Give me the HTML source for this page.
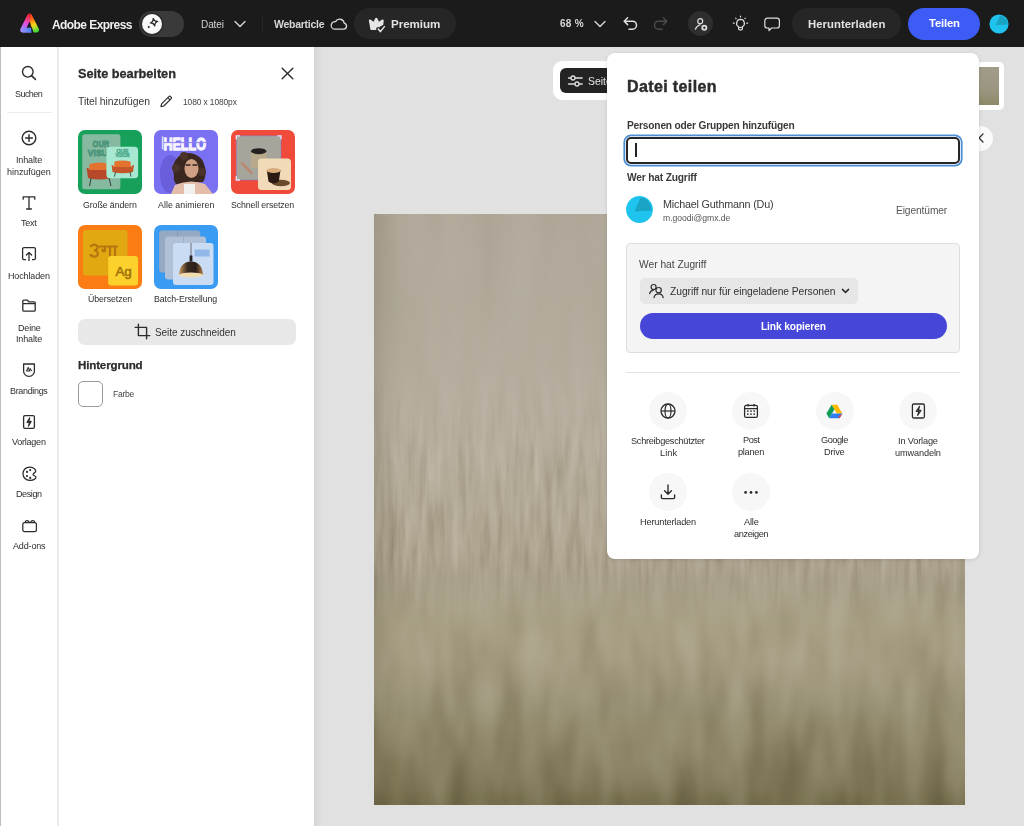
<!DOCTYPE html>
<html><head><meta charset="utf-8"><style>
html,body{margin:0;padding:0;width:1024px;height:826px;overflow:hidden;background:#e1e1e1;font-family:"Liberation Sans", sans-serif}
#root{position:absolute;left:0;top:0;width:1024px;height:826px;filter:blur(0.35px)}
div{box-sizing:border-box}
#root>div{will-change:transform}
</style></head><body><div id="root">
<div style="position:absolute;left:0;top:0;width:1024px;height:47px;background:#1b1b1b"></div>
<svg style="position:absolute;left:18px;top:11px" width="24" height="24" viewBox="0 0 24 24">
<defs>
<linearGradient id="lgR" gradientUnits="userSpaceOnUse" x1="11" y1="3" x2="19" y2="21"><stop offset="0" stop-color="#f5202a"/><stop offset="0.3" stop-color="#ff6a14"/><stop offset="0.58" stop-color="#ffd21a"/><stop offset="0.8" stop-color="#9ade2a"/><stop offset="1" stop-color="#34d43a"/></linearGradient>
<linearGradient id="lgL" gradientUnits="userSpaceOnUse" x1="11" y1="3" x2="5" y2="19"><stop offset="0" stop-color="#f5202a"/><stop offset="0.3" stop-color="#f23a7a"/><stop offset="0.6" stop-color="#e050e0"/><stop offset="1" stop-color="#a484ff"/></linearGradient>
<linearGradient id="lgB" gradientUnits="userSpaceOnUse" x1="2" y1="0" x2="14" y2="0"><stop offset="0" stop-color="#a890ff"/><stop offset="1" stop-color="#4080f2"/></linearGradient>
<clipPath id="cR"><path d="M11.6 0 H24 V24 H15 L11.6 10.4 Z"/></clipPath>
<clipPath id="cL"><path d="M11.6 0 H0 V24 H15 L11.6 10.4 Z"/></clipPath>
</defs>
<path clip-path="url(#cR)" d="M11.6 5 L18.5 18.9 L4.7 18.9 Z" fill="url(#lgR)" stroke="url(#lgR)" stroke-width="5" stroke-linejoin="round"/>
<path clip-path="url(#cL)" d="M11.6 5 L18.5 18.9 L4.7 18.9 Z" fill="url(#lgL)" stroke="url(#lgL)" stroke-width="5" stroke-linejoin="round"/>
<path d="M4.8 19.4 L5.8 18.4 L12.6 18.4 L12.8 19.4 Z" fill="url(#lgB)" stroke="url(#lgB)" stroke-width="4" stroke-linejoin="round"/>
<path d="M11.6 11 L8.9 16.4 L13.3 16.4 Z" fill="#1b1b1b" stroke="#1b1b1b" stroke-width="0.5" stroke-linejoin="round"/>
<path d="M13 16.2 L13.7 16.2 L16 22.6 L13.6 22.6 Z" fill="#1b1b1b"/>
</svg>
<div style="position:absolute;left:52.00px;top:18.74px;font-size:12px;line-height:12px;font-weight:700;color:#efefef;letter-spacing:-0.572px;white-space:pre">Adobe Express</div>
<div style="position:absolute;left:139px;top:11px;width:45px;height:26px;border-radius:13px;background:#3a3a3a"></div>
<div style="position:absolute;left:142px;top:14px;width:20px;height:20px;border-radius:10px;background:#fafafa;box-shadow:0 0 0 1.5px #2e2e2e"></div>
<svg style="position:absolute;left:142px;top:14px" width="20" height="20" viewBox="0 0 20 20">
<g transform="rotate(-12 12 8.2)"><path d="M12 4.4 Q12.5 7.7 15.8 8.2 Q12.5 8.7 12 12 Q11.5 8.7 8.2 8.2 Q11.5 7.7 12 4.4Z" fill="none" stroke="#2a2a2a" stroke-width="1.25" stroke-linejoin="round"/></g>
<circle cx="6.8" cy="13" r="1.05" fill="#2a2a2a"/>
</svg>
<div style="position:absolute;left:200.50px;top:19.63px;font-size:10px;line-height:10px;font-weight:400;color:#d4d4d4;letter-spacing:-0.086px;white-space:pre">Datei</div>
<svg style="position:absolute;left:233px;top:19px" width="14" height="10" viewBox="0 0 14 10"><path d="M2 2.5 L7 7.5 L12 2.5" fill="none" stroke="#d4d4d4" stroke-width="1.4" stroke-linecap="round" stroke-linejoin="round"/></svg>
<div style="position:absolute;left:262px;top:17px;width:1px;height:14px;background:#262626"></div>
<div style="position:absolute;left:273.50px;top:19.31px;font-size:10.5px;line-height:10.5px;font-weight:700;color:#d8d8d8;letter-spacing:-0.268px;white-space:pre">Webarticle</div>
<svg style="position:absolute;left:330px;top:16px" width="18" height="15" viewBox="0 0 18 15"><path d="M4.5 13.2 H13.6 A3.1 3.1 0 0 0 14.2 7.1 A4.6 4.6 0 0 0 5.6 5.6 A3.8 3.8 0 0 0 4.5 13.2Z" fill="none" stroke="#d8d8d8" stroke-width="1.3" stroke-linejoin="round"/></svg>
<div style="position:absolute;left:354px;top:8px;width:102px;height:31px;border-radius:15.5px;background:#262626"></div>
<svg style="position:absolute;left:367px;top:15.6px" width="20" height="18" viewBox="0 0 20 18">
<path transform="translate(0 0.6) scale(1.13 0.86)" d="M1.6 4.6 Q1.8 2.6 3.4 3.6 L5.8 6 L7.2 2.2 Q8.2 0.4 9.2 2.2 L10.6 6 L13 3.6 Q14.6 2.6 14.8 4.6 L14.4 10.2 Q11.8 10.6 10.6 13.4 L10.2 15.6 H4.2 Q3.2 15.6 3 14.6 Z" fill="#e6e6e6"/>
<path d="M11.2 13 L13.4 15.6 L17.4 10.6" fill="none" stroke="#262626" stroke-width="4" stroke-linecap="round" stroke-linejoin="round"/><path d="M11.2 13 L13.4 15.6 L17.4 10.6" fill="none" stroke="#e6e6e6" stroke-width="1.5" stroke-linecap="round" stroke-linejoin="round"/>
</svg>
<div style="position:absolute;left:390.70px;top:18.18px;font-size:11.6px;line-height:11.6px;font-weight:700;color:#e2e2e2;letter-spacing:-0.057px;white-space:pre">Premium</div>
<div style="position:absolute;left:559.70px;top:19.43px;font-size:10px;line-height:10px;font-weight:700;color:#d8d8d8;letter-spacing:0.302px;white-space:pre">68 %</div>
<svg style="position:absolute;left:593px;top:19px" width="14" height="10" viewBox="0 0 14 10"><path d="M2 2.5 L7 7.5 L12 2.5" fill="none" stroke="#d4d4d4" stroke-width="1.4" stroke-linecap="round" stroke-linejoin="round"/></svg>
<svg style="position:absolute;left:622px;top:15px" width="18" height="16" viewBox="0 0 18 16"><path d="M2.5 6.2 H10.5 A4 4 0 0 1 10.5 14.2 H7" fill="none" stroke="#e0e0e0" stroke-width="1.5" stroke-linecap="round"/><path d="M5.6 2.8 L2.2 6.2 L5.6 9.6" fill="none" stroke="#e0e0e0" stroke-width="1.5" stroke-linecap="round" stroke-linejoin="round"/></svg>
<svg style="position:absolute;left:651px;top:15px" width="18" height="16" viewBox="0 0 18 16"><path d="M15.5 6.2 H7.5 A4 4 0 0 0 7.5 14.2 H11" fill="none" stroke="#4a4a4a" stroke-width="1.5" stroke-linecap="round"/><path d="M12.4 2.8 L15.8 6.2 L12.4 9.6" fill="none" stroke="#4a4a4a" stroke-width="1.5" stroke-linecap="round" stroke-linejoin="round"/></svg>
<div style="position:absolute;left:688px;top:11px;width:25px;height:25px;border-radius:12.5px;background:#2e2e2e"></div>
<svg style="position:absolute;left:688px;top:11px" width="25" height="25" viewBox="0 0 25 25">
<circle cx="12.2" cy="10.2" r="2.5" fill="none" stroke="#dedede" stroke-width="1.2"/>
<path d="M7.4 18.2 Q8.8 14.6 12 13.8" fill="none" stroke="#dedede" stroke-width="1.2" stroke-linecap="round"/>
<circle cx="16.3" cy="16.8" r="3" fill="#dedede"/>
<path d="M16.3 15.4 V18.2 M14.9 16.8 H17.7" stroke="#2e2e2e" stroke-width="1"/>
</svg>
<svg style="position:absolute;left:731px;top:14px" width="19" height="19" viewBox="0 0 19 19">
<path d="M9.5 5.4 A3.9 3.9 0 0 0 7.6 12.7 V14.8 Q7.6 15.9 8.7 15.9 H10.3 Q11.4 15.9 11.4 14.8 V12.7 A3.9 3.9 0 0 0 9.5 5.4Z" fill="none" stroke="#dedede" stroke-width="1.2" stroke-linejoin="round"/>
<path d="M7.8 13.4 H11.2" stroke="#dedede" stroke-width="1.1"/>
<path d="M9.5 2.2 V2.9 M4.7 4.2 L5.1 4.6 M14.3 4.2 L13.9 4.6 M2.4 9.2 H3.2 M15.8 9.2 H16.6" stroke="#dedede" stroke-width="1.2" stroke-linecap="round"/>
</svg>
<svg style="position:absolute;left:763px;top:16px" width="18" height="17" viewBox="0 0 18 17"><path d="M4.4 2.2 H13.8 A2.6 2.6 0 0 1 16.4 4.8 V9.4 A2.6 2.6 0 0 1 13.8 12 H8.6 L6 14.6 V12 H4.4 A2.6 2.6 0 0 1 1.8 9.4 V4.8 A2.6 2.6 0 0 1 4.4 2.2Z" fill="none" stroke="#dedede" stroke-width="1.2" stroke-linejoin="round"/></svg>
<div style="position:absolute;left:792px;top:8px;width:109px;height:31px;border-radius:15.5px;background:#262626"></div>
<div style="position:absolute;left:808.00px;top:18.63px;font-size:11.3px;line-height:11.3px;font-weight:700;color:#e2e2e2;letter-spacing:0.058px;white-space:pre">Herunterladen</div>
<div style="position:absolute;left:908px;top:8px;width:72px;height:32px;border-radius:16px;background:#3d5cf5"></div>
<div style="position:absolute;left:928.50px;top:18.43px;font-size:11.3px;line-height:11.3px;font-weight:700;color:#ffffff;letter-spacing:-0.163px;white-space:pre">Teilen</div>
<svg style="position:absolute;left:989px;top:14px" width="20" height="20" viewBox="0 0 20 20">
<circle cx="10" cy="10" r="9.6" fill="#1ec4ee"/>
<path d="M11 1.5 A8.6 8.6 0 0 1 18.8 10.5 L6.5 11.2 Z" fill="#19a3c4"/>
</svg>
<div style="position:absolute;left:0;top:47px;width:59px;height:779px;background:#ffffff;border-right:2px solid #ebebeb;box-sizing:border-box"></div>
<div style="position:absolute;left:0;top:47px;width:1px;height:779px;background:#bdbdbd"></div>
<div style="position:absolute;left:7px;top:112px;width:45px;height:1px;background:#ececec"></div>
<svg style="position:absolute;left:20px;top:64px" width="18" height="18" viewBox="0 0 18 18"><circle cx="7.8" cy="7.8" r="5.3" fill="none" stroke="#2c2c2c" stroke-width="1.4"/><path d="M11.6 11.6 L15.4 15.4" stroke="#2c2c2c" stroke-width="1.5" stroke-linecap="round"/></svg>
<div style="position:absolute;left:15.15px;top:90.08px;font-size:9px;line-height:9px;font-weight:400;color:#2e2e2e;letter-spacing:-0.565px;white-space:pre">Suchen</div>
<svg style="position:absolute;left:20px;top:129px" width="18" height="18" viewBox="0 0 18 18"><circle cx="9" cy="9" r="6.8" fill="none" stroke="#2c2c2c" stroke-width="1.4"/><path d="M9 5.6 V12.4 M5.6 9 H12.4" stroke="#2c2c2c" stroke-width="1.4" stroke-linecap="round"/></svg>
<div style="position:absolute;left:15.90px;top:156.08px;font-size:9px;line-height:9px;font-weight:400;color:#2e2e2e;letter-spacing:-0.137px;white-space:pre">Inhalte</div>
<div style="position:absolute;left:7.15px;top:167.68px;font-size:9px;line-height:9px;font-weight:400;color:#2e2e2e;letter-spacing:-0.038px;white-space:pre">hinzufügen</div>
<svg style="position:absolute;left:21px;top:195px" width="16" height="16" viewBox="0 0 16 16"><path d="M2.2 4.2 V1.8 H13.8 V4.2 M8 1.8 V14 M5.6 14 H10.4" fill="none" stroke="#2c2c2c" stroke-width="1.3" stroke-linecap="round" stroke-linejoin="round"/></svg>
<div style="position:absolute;left:21.15px;top:219.08px;font-size:9px;line-height:9px;font-weight:400;color:#2e2e2e;letter-spacing:-0.269px;white-space:pre">Text</div>
<svg style="position:absolute;left:21px;top:246px" width="16" height="16" viewBox="0 0 16 16"><path d="M5 13.6 H3 A1.4 1.4 0 0 1 1.6 12.2 V3 A1.4 1.4 0 0 1 3 1.6 H13 A1.4 1.4 0 0 1 14.4 3 V12.2 A1.4 1.4 0 0 1 13 13.6 H11" fill="none" stroke="#2c2c2c" stroke-width="1.3"/><path d="M8 14.6 V6.6 M5.4 9 L8 6.4 L10.6 9" fill="none" stroke="#2c2c2c" stroke-width="1.3" stroke-linecap="round" stroke-linejoin="round"/></svg>
<div style="position:absolute;left:8.00px;top:272.08px;font-size:9px;line-height:9px;font-weight:400;color:#2e2e2e;letter-spacing:-0.129px;white-space:pre">Hochladen</div>
<svg style="position:absolute;left:21px;top:298px" width="16" height="15" viewBox="0 0 16 15"><path d="M1.8 3.2 A1 1 0 0 1 2.8 2.2 H6.4 L7.8 3.8 H13.2 A1 1 0 0 1 14.2 4.8 V12.2 A1 1 0 0 1 13.2 13.2 H2.8 A1 1 0 0 1 1.8 12.2 Z M1.8 5.6 H14.2" fill="none" stroke="#2c2c2c" stroke-width="1.3" stroke-linejoin="round"/></svg>
<div style="position:absolute;left:17.60px;top:323.88px;font-size:9px;line-height:9px;font-weight:400;color:#2e2e2e;letter-spacing:-0.179px;white-space:pre">Deine</div>
<div style="position:absolute;left:15.90px;top:335.48px;font-size:9px;line-height:9px;font-weight:400;color:#2e2e2e;letter-spacing:-0.137px;white-space:pre">Inhalte</div>
<svg style="position:absolute;left:21px;top:362px" width="16" height="16" viewBox="0 0 16 16"><path d="M2.6 2 H13.4 V8.6 A5.4 5.4 0 0 1 8 14.4 A5.4 5.4 0 0 1 2.6 8.6 Z" fill="none" stroke="#2c2c2c" stroke-width="1.3" stroke-linejoin="round"/><path d="M5.6 9 L7.2 5.4 L8.8 9 Z M9 6.4 L10.6 9" fill="none" stroke="#2c2c2c" stroke-width="1.1" stroke-linejoin="round"/></svg>
<div style="position:absolute;left:10.10px;top:386.88px;font-size:9px;line-height:9px;font-weight:400;color:#2e2e2e;letter-spacing:-0.341px;white-space:pre">Brandings</div>
<svg style="position:absolute;left:21px;top:414px" width="16" height="16" viewBox="0 0 16 16"><rect x="2.6" y="1.6" width="10.8" height="12.8" rx="1.4" fill="none" stroke="#2c2c2c" stroke-width="1.3"/><path d="M8.8 3.8 L6 8.4 H8.4 L7.4 12.2 L10.2 7.4 H7.8 Z" fill="none" stroke="#2c2c2c" stroke-width="1.1" stroke-linejoin="round"/></svg>
<div style="position:absolute;left:12.05px;top:437.88px;font-size:9px;line-height:9px;font-weight:400;color:#2e2e2e;letter-spacing:-0.233px;white-space:pre">Vorlagen</div>
<svg style="position:absolute;left:21px;top:465px" width="16" height="16" viewBox="0 0 16 16"><path d="M8.6 2.1 C4.6 2.1 2 5 2 8.7 C2 12.6 5 15.4 9 15.4 C12.2 15.4 15 13.8 15 12.2 C15 11 13.6 10.9 12.6 10.3 C11.6 9.7 12.2 8.5 13.3 7.9 C14.5 7.3 14.9 6.3 14.5 5.3 C13.5 3.1 11.2 2.1 8.6 2.1 Z" fill="none" stroke="#2c2c2c" stroke-width="1.25" stroke-linejoin="round"/><circle cx="6" cy="6.9" r="1.1" fill="#2c2c2c"/><circle cx="9.2" cy="5.1" r="1.1" fill="#2c2c2c"/><circle cx="6" cy="11" r="1.1" fill="#2c2c2c"/><circle cx="9.2" cy="12.9" r="1.1" fill="#2c2c2c"/></svg>
<div style="position:absolute;left:16.00px;top:490.08px;font-size:9px;line-height:9px;font-weight:400;color:#2e2e2e;letter-spacing:-0.403px;white-space:pre">Design</div>
<svg style="position:absolute;left:21px;top:517px" width="16" height="16" viewBox="0 0 16 16"><rect x="1.8" y="5.6" width="13.6" height="9" rx="1.6" fill="none" stroke="#2c2c2c" stroke-width="1.25"/><path d="M4.2 5.6 A1.9 1.9 0 0 1 8 5.6 M9.8 5.6 A1.9 1.9 0 0 1 13.6 5.6" fill="none" stroke="#2c2c2c" stroke-width="1.25"/></svg>
<div style="position:absolute;left:12.70px;top:542.08px;font-size:9px;line-height:9px;font-weight:400;color:#2e2e2e;letter-spacing:-0.154px;white-space:pre">Add-ons</div>
<div style="position:absolute;left:59px;top:47px;width:255px;height:779px;background:#ffffff"></div>
<div style="position:absolute;left:78.00px;top:68.15px;font-size:12.7px;line-height:12.7px;font-weight:700;color:#2c2c2c;letter-spacing:-0.007px;white-space:pre;-webkit-text-stroke:0.3px #2c2c2c">Seite bearbeiten</div>
<svg style="position:absolute;left:280px;top:66px" width="15" height="15" viewBox="0 0 15 15"><path d="M2.2 2.2 L12.8 12.8 M12.8 2.2 L2.2 12.8" stroke="#2c2c2c" stroke-width="1.4" stroke-linecap="round"/></svg>
<div style="position:absolute;left:78.40px;top:97.29px;font-size:10.4px;line-height:10.4px;font-weight:400;color:#3a3a3a;letter-spacing:-0.069px;white-space:pre">Titel hinzufügen</div>
<svg style="position:absolute;left:159px;top:95px" width="14" height="13" viewBox="0 0 14 13"><path d="M2 11.6 L2.6 8.8 L9.8 1.6 A1.2 1.2 0 0 1 11.6 1.6 L12 2 A1.2 1.2 0 0 1 12 3.8 L4.8 11 Z M8.8 2.6 L11 4.8" fill="none" stroke="#2c2c2c" stroke-width="1.2" stroke-linejoin="round"/></svg>
<div style="position:absolute;left:182.50px;top:98.29px;font-size:8.4px;line-height:8.4px;font-weight:400;color:#444444;letter-spacing:-0.093px;white-space:pre">1080 x 1080px</div>
<svg style="position:absolute;left:78px;top:130px" width="64" height="64" viewBox="0 0 64 64"><defs><clipPath id="cc78130"><rect width="64" height="64" rx="7"/></clipPath></defs><g clip-path="url(#cc78130)"><rect width="64" height="64" fill="#17a05a"/>
<rect x="4.2" y="4.2" width="38.2" height="55" rx="2.5" fill="#86baa0"/>
<text x="14.6" y="17.2" font-family="Liberation Sans" font-weight="700" font-size="9.6" fill="#4c977c" stroke="#4c977c" stroke-width="0.9" textLength="16.6" lengthAdjust="spacingAndGlyphs">OUR</text>
<text x="9.8" y="25.8" font-family="Liberation Sans" font-weight="700" font-size="9.6" fill="#4c977c" stroke="#4c977c" stroke-width="0.9" textLength="20" lengthAdjust="spacingAndGlyphs">VISU</text>
<path d="M11.5 34 Q21 31 31 34 L31.5 42 L11 42 Z" fill="#e3732f"/>
<path d="M8.6 38 Q10 37 11.5 40 L31 40 Q33 37 34 38 L33 48 Q22 51 10 48 Z" fill="#b8482a"/>
<path d="M13 48 L11.6 56 M31 48 L33 56" stroke="#2a2a2a" stroke-width="0.9"/>
<rect x="28.4" y="16.8" width="31.7" height="31.4" rx="3.5" fill="#a7e8d0"/>
<text x="38.5" y="22.6" font-family="Liberation Sans" font-weight="700" font-size="5" fill="#4ca88c" stroke="#4ca88c" stroke-width="0.4" textLength="12" lengthAdjust="spacingAndGlyphs">OUR</text>
<text x="37.6" y="27.4" font-family="Liberation Sans" font-weight="700" font-size="5" fill="#4ca88c" stroke="#4ca88c" stroke-width="0.4" textLength="14" lengthAdjust="spacingAndGlyphs">VISION</text>
<path d="M36.5 31.5 Q44.5 29.5 52.5 31.5 L53 38 L36 38 Z" fill="#e3732f"/>
<path d="M33.6 35 Q35 34.5 36 37 L53 37 Q54.5 34.5 56 35 L55 42 Q45 44.5 34.5 42 Z" fill="#c4562a"/>
<path d="M37.5 42 L36.4 46.6 M52 42 L53 46.6" stroke="#2a2a2a" stroke-width="0.8"/></g></svg>
<svg style="position:absolute;left:154px;top:130px" width="64" height="64" viewBox="0 0 64 64"><defs><clipPath id="cc154130"><rect width="64" height="64" rx="7"/></clipPath></defs><g clip-path="url(#cc154130)"><rect width="64" height="64" fill="#7a70f2"/>
<ellipse cx="16" cy="44" rx="10" ry="19" fill="#6a5edb"/>
<text x="9.4" y="19.6" font-family="Liberation Sans" font-weight="700" font-size="16.5" fill="#f6f4ff" stroke="#f6f4ff" stroke-width="1.3" stroke-linejoin="round" textLength="42.6" lengthAdjust="spacingAndGlyphs">HELLO</text>
<path d="M8 12.6 H53" stroke="#8a80f0" stroke-width="1"/><rect x="7.8" y="6.4" width="1.6" height="13" fill="#d8d4fb"/>
<path d="M20 46 Q17 34 24 27 Q31 21 40 24 Q49 27 51 37 Q53 46 49 52 L22 54 Q19 50 20 46Z" fill="#3a2820"/>
<circle cx="22" cy="38" r="4" fill="#4a3328"/><circle cx="48" cy="42" r="4" fill="#4a3328"/><circle cx="30" cy="26" r="4" fill="#4a3328"/>
<ellipse cx="37.5" cy="38.5" rx="7" ry="9.6" fill="#d0a084"/>
<path d="M31.5 35 H36.5 M38.5 35 H43.5" stroke="#2a2020" stroke-width="1.6"/>
<path d="M17 64 L21 55 Q36 48.5 51 54 L59 64 Z" fill="#e3bda9"/>
<rect x="30" y="54" width="11" height="10" fill="#f3efec"/></g></svg>
<svg style="position:absolute;left:231px;top:130px" width="64" height="64" viewBox="0 0 64 64"><defs><clipPath id="cc231130"><rect width="64" height="64" rx="7"/></clipPath></defs><g clip-path="url(#cc231130)"><rect width="64" height="64" fill="#f04b3a"/>
<rect x="5.3" y="5.8" width="44.7" height="44.2" fill="#a5a59c" stroke="#7a6fe6" stroke-width="0.7" stroke-dasharray="2 1.4"/>
<path d="M5.3 9.5 V5.8 H9 M46.3 5.8 H50 V9.5 M5.3 46.3 V50 H9" fill="none" stroke="#e8e4ff" stroke-width="1.3"/>
<rect x="20" y="21" width="15.5" height="17" rx="1.5" fill="#b9aa8e"/>
<ellipse cx="27.7" cy="21.2" rx="7.6" ry="3" fill="#262020"/>
<path d="M10.8 33 L20.5 43" stroke="#b98a72" stroke-width="2.6" stroke-linecap="round"/>
<rect x="27" y="28.6" width="33" height="31.4" rx="3.5" fill="#f1dab8"/>
<ellipse cx="50" cy="53" rx="9" ry="3.2" fill="#6a4b2c"/>
<path d="M35.8 40 L37.5 51.5 Q42.5 55.5 47.8 51.5 L49.5 40 Z" fill="#2a1a12"/>
<ellipse cx="42.6" cy="40.5" rx="6.9" ry="2.6" fill="#d9ad7c"/></g></svg>
<svg style="position:absolute;left:78px;top:225px" width="64" height="64" viewBox="0 0 64 64"><defs><clipPath id="cc78225"><rect width="64" height="64" rx="7"/></clipPath></defs><g clip-path="url(#cc78225)"><rect width="64" height="64" fill="#fb7c12"/>
<rect x="5" y="5" width="44.5" height="45.5" rx="3" fill="#e2a812"/>
<path d="M13 21 Q17 18 19.5 21.5 Q20 25 16 25.5 Q21 26 19.5 30.5 Q16.5 33 12.5 30 M21.5 21.5 H39 M27 21.5 V26 Q24 27 24.5 24.5 M32 21.5 V32 M37 21.5 V32" fill="none" stroke="#b9740f" stroke-width="2.2" stroke-linecap="round"/>
<rect x="30.2" y="31" width="29.8" height="29.4" rx="3" fill="#fdd12b"/>
<text x="37.4" y="51.2" font-family="Liberation Sans" font-weight="400" font-size="13.5" fill="#9c6e0c" stroke="#9c6e0c" stroke-width="0.5" textLength="16.4" lengthAdjust="spacingAndGlyphs">Ag</text></g></svg>
<svg style="position:absolute;left:154px;top:225px" width="64" height="64" viewBox="0 0 64 64"><defs><clipPath id="cc154225"><rect width="64" height="64" rx="7"/></clipPath></defs><g clip-path="url(#cc154225)"><rect width="64" height="64" fill="#3a9bf2"/>
<rect x="5.2" y="5.5" width="41" height="42" rx="3" fill="#96a9c2"/>
<path d="M23.5 5.5 V47.5" stroke="#7f94b0" stroke-width="0.8"/>
<rect x="11" y="11.6" width="41" height="43" rx="3" fill="#afc0d7"/>
<path d="M29.5 11.6 V54.6" stroke="#98abc6" stroke-width="0.8"/>
<rect x="19" y="18" width="40.5" height="42" rx="3" fill="#cadcf4"/>
<rect x="40.6" y="24.5" width="15" height="7" fill="#92b8e8"/>
<path d="M37 18 V32" stroke="#2a2a2a" stroke-width="0.6"/>
<rect x="35.6" y="30.5" width="2.8" height="6" fill="#222"/>
<defs><linearGradient id="lampg" x1="0" y1="0" x2="1" y2="0"><stop offset="0" stop-color="#c89a60"/><stop offset="0.35" stop-color="#3a2a22"/><stop offset="0.7" stop-color="#2a1e18"/><stop offset="1" stop-color="#b08050"/></linearGradient></defs><path d="M25 50 Q25.5 37 37 36.4 Q48.5 37 49 50 Z" fill="url(#lampg)"/>
<ellipse cx="37" cy="50" rx="12" ry="2.6" fill="#f0dcae"/></g></svg>
<div style="position:absolute;left:83.10px;top:200.65px;font-size:8.8px;line-height:8.8px;font-weight:400;color:#2e2e2e;letter-spacing:-0.090px;white-space:pre">Große ändern</div>
<div style="position:absolute;left:157.85px;top:200.65px;font-size:8.8px;line-height:8.8px;font-weight:400;color:#2e2e2e;letter-spacing:0.041px;white-space:pre">Alle animieren</div>
<div style="position:absolute;left:231.40px;top:200.65px;font-size:8.8px;line-height:8.8px;font-weight:400;color:#2e2e2e;letter-spacing:-0.124px;white-space:pre">Schnell ersetzen</div>
<div style="position:absolute;left:87.90px;top:294.65px;font-size:8.8px;line-height:8.8px;font-weight:400;color:#2e2e2e;letter-spacing:-0.089px;white-space:pre">Übersetzen</div>
<div style="position:absolute;left:154.40px;top:294.65px;font-size:8.8px;line-height:8.8px;font-weight:400;color:#2e2e2e;letter-spacing:-0.091px;white-space:pre">Batch-Erstellung</div>
<div style="position:absolute;left:77.5px;top:319px;width:217.5px;height:25.5px;border-radius:7px;background:#e8e8e8"></div>
<svg style="position:absolute;left:134px;top:323px" width="17" height="17" viewBox="0 0 17 17"><path d="M4.4 1.2 V12.6 H15.8 M1.2 4.4 H12.6 V15.8" fill="none" stroke="#2c2c2c" stroke-width="1.4" stroke-linecap="round" stroke-linejoin="round"/></svg>
<div style="position:absolute;left:155.20px;top:327.83px;font-size:10px;line-height:10px;font-weight:400;color:#333333;letter-spacing:-0.058px;white-space:pre">Seite zuschneiden</div>
<div style="position:absolute;left:78.00px;top:359.48px;font-size:11.6px;line-height:11.6px;font-weight:700;color:#2c2c2c;letter-spacing:-0.167px;white-space:pre;-webkit-text-stroke:0.25px #2c2c2c">Hintergrund</div>
<div style="position:absolute;left:77.5px;top:381px;width:25px;height:25.5px;border-radius:5px;background:#fff;border:1px solid #9a9a9a;box-sizing:border-box"></div>
<div style="position:absolute;left:112.80px;top:390.42px;font-size:8.6px;line-height:8.6px;font-weight:400;color:#444444;letter-spacing:-0.317px;white-space:pre">Farbe</div>
<div style="position:absolute;left:314px;top:47px;width:710px;height:779px;background:#e1e1e1"></div>
<div style="position:absolute;left:314px;top:47px;width:9px;height:779px;background:linear-gradient(90deg,#d6d6d6,#e1e1e1)"></div>
<div style="position:absolute;left:374px;top:214px;width:591px;height:591px;background:
linear-gradient(180deg,#b1a89a 0.3%,#b2ab9c 14.6%,#b6ae9f 31.5%,#b6ad9d 39.9%,#b2a996 48.4%,#aea48f 56.9%,#a9a08b 61.9%,#a8a085 68.7%,#a59c82 75.5%,#9a9276 82.2%,#8f8767 89.0%,#837b5b 95.8%,#766f4e 99.7%)"></div>
<svg style="position:absolute;left:374px;top:214px;mix-blend-mode:soft-light" width="591" height="591" viewBox="0 0 591 591">
<defs>
<filter id="nA" x="0" y="0" width="100%" height="100%" color-interpolation-filters="sRGB">
<feTurbulence type="fractalNoise" baseFrequency="0.03 0.004" numOctaves="2" seed="3"/>
<feColorMatrix type="matrix" values="0.45 0 0 0 0.275  0.45 0 0 0 0.275  0.45 0 0 0 0.275  0 0 0 0 1"/>
</filter>
<filter id="nB" x="0" y="0" width="100%" height="100%" color-interpolation-filters="sRGB">
<feTurbulence type="fractalNoise" baseFrequency="0.14 0.014" numOctaves="3" seed="11"/>
<feColorMatrix type="matrix" values="0.5 0 0 0 0.25  0.5 0 0 0 0.25  0.5 0 0 0 0.25  0 0 0 0 1"/>
</filter>
<filter id="nC" x="0" y="0" width="100%" height="100%" color-interpolation-filters="sRGB">
<feTurbulence type="fractalNoise" baseFrequency="0.04 0.012" numOctaves="2" seed="5"/>
<feColorMatrix type="matrix" values="0.55 0 0 0 0.225  0.55 0 0 0 0.225  0.55 0 0 0 0.225  0 0 0 0 1"/>
</filter>
<linearGradient id="gA" x1="0" y1="0" x2="0" y2="1"><stop offset="0" stop-color="#fff" stop-opacity="0.3"/><stop offset="0.3" stop-color="#fff" stop-opacity="0.35"/><stop offset="0.45" stop-color="#fff" stop-opacity="0"/></linearGradient>
<linearGradient id="gB" x1="0" y1="0" x2="0" y2="1"><stop offset="0.25" stop-color="#fff" stop-opacity="0"/><stop offset="0.42" stop-color="#fff" stop-opacity="0.8"/><stop offset="0.6" stop-color="#fff" stop-opacity="0.9"/><stop offset="0.7" stop-color="#fff" stop-opacity="0"/></linearGradient>
<linearGradient id="gC" x1="0" y1="0" x2="0" y2="1"><stop offset="0.58" stop-color="#fff" stop-opacity="0"/><stop offset="0.72" stop-color="#fff" stop-opacity="0.7"/><stop offset="1" stop-color="#fff" stop-opacity="0.7"/></linearGradient>
<mask id="mA"><rect width="591" height="591" fill="url(#gA)"/></mask>
<mask id="mB"><rect width="591" height="591" fill="url(#gB)"/></mask>
<mask id="mC"><rect width="591" height="591" fill="url(#gC)"/></mask>
</defs>
<rect width="591" height="591" fill="#808080"/>
<rect width="591" height="591" filter="url(#nA)" mask="url(#mA)"/>
<rect width="591" height="591" filter="url(#nB)" mask="url(#mB)"/>
<rect width="591" height="591" filter="url(#nC)" mask="url(#mC)"/>
</svg>
<div style="position:absolute;left:374px;top:214px;width:26px;height:591px;background:linear-gradient(90deg,rgba(70,62,35,0.16),rgba(70,62,35,0))"></div>
<div style="position:absolute;left:553px;top:61px;width:70px;height:39px;border-radius:9px;background:#ffffff"></div>
<div style="position:absolute;left:559.5px;top:68px;width:60px;height:25px;border-radius:6px;background:#232323"></div>
<svg style="position:absolute;left:567px;top:73px" width="17" height="16" viewBox="0 0 17 16"><path d="M1.6 5 H15.2 M1.6 11 H15.2" stroke="#e0e0e0" stroke-width="1.3" stroke-linecap="round"/><circle cx="6" cy="5" r="2" fill="#232323" stroke="#e0e0e0" stroke-width="1.3"/><circle cx="10" cy="11" r="2" fill="#232323" stroke="#e0e0e0" stroke-width="1.3"/></svg>
<div style="position:absolute;left:588.40px;top:76.69px;font-size:10.4px;line-height:10.4px;font-weight:400;color:#e6e6e6;letter-spacing:0.000px;white-space:pre">Seite</div>
<div style="position:absolute;left:958px;top:62px;width:46px;height:48px;border-radius:5px;background:#ffffff"></div>
<div style="position:absolute;left:962px;top:67px;width:37px;height:38px;background:linear-gradient(180deg,#a19c8a,#9c9681 60%,#8d8969)"></div>
<div style="position:absolute;left:967.5px;top:125.5px;width:25px;height:25px;border-radius:12.5px;background:#fafafa"></div>
<svg style="position:absolute;left:976px;top:132px" width="10" height="12" viewBox="0 0 10 12"><path d="M7 2 L3 6 L7 10" fill="none" stroke="#333" stroke-width="1.3" stroke-linecap="round" stroke-linejoin="round"/></svg>
<div style="position:absolute;left:607px;top:53px;width:372px;height:506px;border-radius:8px;background:#ffffff;box-shadow:0 1px 4px rgba(0,0,0,0.12)"></div>
<div style="position:absolute;left:626.50px;top:79.15px;font-size:16px;line-height:16px;font-weight:700;color:#2c2c2c;letter-spacing:0.376px;white-space:pre;-webkit-text-stroke:0.45px #2c2c2c">Datei teilen</div>
<div style="position:absolute;left:626.50px;top:121.06px;font-size:10.2px;line-height:10.2px;font-weight:700;color:#3a3a3a;letter-spacing:-0.193px;white-space:pre">Personen oder Gruppen hinzufügen</div>
<div style="position:absolute;left:626px;top:136.8px;width:334px;height:27.4px;border-radius:5px;background:#fff;border:2px solid #262626;box-shadow:0 0 0 0.8px #ffffff,0 0 0 2.6px #4c8ed6"></div>
<div style="position:absolute;left:634.8px;top:143.2px;width:1.6px;height:14.4px;background:#222"></div>
<div style="position:absolute;left:626.50px;top:173.46px;font-size:10.2px;line-height:10.2px;font-weight:700;color:#3a3a3a;letter-spacing:-0.167px;white-space:pre">Wer hat Zugriff</div>
<svg style="position:absolute;left:626px;top:196px" width="27" height="27" viewBox="0 0 27 27">
<circle cx="13.5" cy="13.5" r="13.4" fill="#1ec4ee"/>
<path d="M14.6 1.6 A12 12 0 0 1 25.4 14.6 L8.6 15.4 Z" fill="#19a3c4"/>
</svg>
<div style="position:absolute;left:663.00px;top:198.56px;font-size:10.8px;line-height:10.8px;font-weight:400;color:#3a3a3a;letter-spacing:-0.202px;white-space:pre">Michael Guthmann (Du)</div>
<div style="position:absolute;left:663.00px;top:213.92px;font-size:8.6px;line-height:8.6px;font-weight:400;color:#555555;letter-spacing:-0.010px;white-space:pre">m.goodi@gmx.de</div>
<div style="position:absolute;left:895.50px;top:205.76px;font-size:10.2px;line-height:10.2px;font-weight:400;color:#555555;letter-spacing:-0.096px;white-space:pre">Eigentümer</div>
<div style="position:absolute;left:626px;top:242.5px;width:333.5px;height:109.5px;border-radius:4px;background:#f4f4f4;border:1px solid #dddddd;box-sizing:border-box"></div>
<div style="position:absolute;left:639.40px;top:260.26px;font-size:10.2px;line-height:10.2px;font-weight:400;color:#444444;letter-spacing:0.023px;white-space:pre">Wer hat Zugriff</div>
<div style="position:absolute;left:640px;top:277.8px;width:218px;height:25.5px;border-radius:5px;background:#e6e6e6"></div>
<svg style="position:absolute;left:648px;top:282px" width="17" height="17" viewBox="0 0 17 17">
<circle cx="5.6" cy="5" r="2.5" fill="none" stroke="#2c2c2c" stroke-width="1.2"/>
<path d="M1.6 11.6 Q2.4 8.6 5.2 8.4" fill="none" stroke="#2c2c2c" stroke-width="1.2" stroke-linecap="round"/>
<circle cx="10.6" cy="8.2" r="2.7" fill="#e6e6e6" stroke="#2c2c2c" stroke-width="1.2"/>
<path d="M6 15.6 Q6.8 11.8 10.6 11.8 Q14.4 11.8 15.2 15.6" fill="none" stroke="#2c2c2c" stroke-width="1.2" stroke-linecap="round"/>
</svg>
<div style="position:absolute;left:669.70px;top:286.58px;font-size:10.3px;line-height:10.3px;font-weight:400;color:#333333;letter-spacing:-0.060px;white-space:pre">Zugriff nur für eingeladene Personen</div>
<svg style="position:absolute;left:840px;top:286px" width="11" height="10" viewBox="0 0 11 10"><path d="M2.4 3.4 L5.5 6.4 L8.6 3.4" fill="none" stroke="#2c2c2c" stroke-width="1.5" stroke-linecap="round" stroke-linejoin="round"/></svg>
<div style="position:absolute;left:639.5px;top:313px;width:307px;height:25.5px;border-radius:13px;background:#4646d9"></div>
<div style="position:absolute;left:760.50px;top:321.76px;font-size:10.2px;line-height:10.2px;font-weight:700;color:#ffffff;letter-spacing:-0.110px;white-space:pre">Link kopieren</div>
<div style="position:absolute;left:626px;top:372px;width:334px;height:1px;background:#e2e2e2"></div>
<div style="position:absolute;left:649px;top:392px;width:38px;height:38px;border-radius:19px;background:#f7f7f7"></div>
<div style="position:absolute;left:732px;top:392px;width:38px;height:38px;border-radius:19px;background:#f7f7f7"></div>
<div style="position:absolute;left:815.5px;top:392px;width:38px;height:38px;border-radius:19px;background:#f7f7f7"></div>
<div style="position:absolute;left:899px;top:392px;width:38px;height:38px;border-radius:19px;background:#f7f7f7"></div>
<div style="position:absolute;left:649px;top:473px;width:38px;height:38px;border-radius:19px;background:#f7f7f7"></div>
<div style="position:absolute;left:732px;top:473px;width:38px;height:38px;border-radius:19px;background:#f7f7f7"></div>
<svg style="position:absolute;left:659px;top:402px" width="18" height="18" viewBox="0 0 18 18"><circle cx="9" cy="9" r="7" fill="none" stroke="#2c2c2c" stroke-width="1.3"/><ellipse cx="9" cy="9" rx="3" ry="7" fill="none" stroke="#2c2c2c" stroke-width="1.2"/><path d="M2 9 H16" stroke="#2c2c2c" stroke-width="1.2"/></svg>
<svg style="position:absolute;left:742px;top:402px" width="18" height="18" viewBox="0 0 18 18"><rect x="2.6" y="3.4" width="12.8" height="12" rx="1.5" fill="none" stroke="#2c2c2c" stroke-width="1.3"/><path d="M2.6 6.6 H15.4 M6 2 V4.4 M12 2 V4.4" stroke="#2c2c2c" stroke-width="1.3"/><g fill="#2c2c2c"><rect x="5" y="8.4" width="1.6" height="1.4"/><rect x="8.2" y="8.4" width="1.6" height="1.4"/><rect x="11.4" y="8.4" width="1.6" height="1.4"/><rect x="5" y="11.4" width="1.6" height="1.4"/><rect x="8.2" y="11.4" width="1.6" height="1.4"/><rect x="11.4" y="11.4" width="1.6" height="1.4"/></g></svg>
<svg style="position:absolute;left:826px;top:404px" width="17" height="15" viewBox="0 0 17 15">
<path d="M5.6 0.8 H11.2 L16.4 9.6 H10.8 Z" fill="#ffba00"/>
<path d="M5.6 0.8 L8.4 5.6 L3.2 14.2 L0.4 9.6 Z" fill="#0f9d58"/>
<path d="M3.2 14.2 L6 9.6 H16.4 L13.6 14.2 Z" fill="#2f7cf0"/>
<path d="M16.4 9.6 L13.6 14.2 L12.4 12.4 Z" fill="#e94235"/>
</svg>
<svg style="position:absolute;left:910px;top:402px" width="17" height="18" viewBox="0 0 17 18"><rect x="2.4" y="2" width="12" height="14" rx="1.5" fill="none" stroke="#2c2c2c" stroke-width="1.3"/><path d="M9.6 4.4 L6.2 9.4 H8.8 L7.6 13.4 L11 8.4 H8.4 Z" fill="none" stroke="#2c2c2c" stroke-width="1.1" stroke-linejoin="round"/></svg>
<svg style="position:absolute;left:659px;top:483px" width="18" height="18" viewBox="0 0 18 18"><path d="M9 2 V11 M5.6 7.8 L9 11.2 L12.4 7.8" fill="none" stroke="#2c2c2c" stroke-width="1.4" stroke-linecap="round" stroke-linejoin="round"/><path d="M2.4 12 V14.6 A1 1 0 0 0 3.4 15.6 H14.6 A1 1 0 0 0 15.6 14.6 V12" fill="none" stroke="#2c2c2c" stroke-width="1.4" stroke-linecap="round"/></svg>
<svg style="position:absolute;left:742px;top:483px" width="18" height="18" viewBox="0 0 18 18"><circle cx="3.6" cy="9.4" r="1.4" fill="#2c2c2c"/><circle cx="9" cy="9.4" r="1.4" fill="#2c2c2c"/><circle cx="14.4" cy="9.4" r="1.4" fill="#2c2c2c"/></svg>
<div style="position:absolute;left:631.00px;top:437.31px;font-size:9.2px;line-height:9.2px;font-weight:400;color:#2e2e2e;letter-spacing:-0.280px;white-space:pre">Schreibgeschützter</div>
<div style="position:absolute;left:659.50px;top:448.71px;font-size:9.2px;line-height:9.2px;font-weight:400;color:#2e2e2e;letter-spacing:0.041px;white-space:pre">Link</div>
<div style="position:absolute;left:742.50px;top:435.91px;font-size:9.2px;line-height:9.2px;font-weight:400;color:#2e2e2e;letter-spacing:-0.470px;white-space:pre">Post</div>
<div style="position:absolute;left:737.85px;top:447.51px;font-size:9.2px;line-height:9.2px;font-weight:400;color:#2e2e2e;letter-spacing:-0.265px;white-space:pre">planen</div>
<div style="position:absolute;left:820.85px;top:436.31px;font-size:9.2px;line-height:9.2px;font-weight:400;color:#2e2e2e;letter-spacing:-0.473px;white-space:pre">Google</div>
<div style="position:absolute;left:824.15px;top:447.91px;font-size:9.2px;line-height:9.2px;font-weight:400;color:#2e2e2e;letter-spacing:-0.192px;white-space:pre">Drive</div>
<div style="position:absolute;left:898.00px;top:436.91px;font-size:9.2px;line-height:9.2px;font-weight:400;color:#2e2e2e;letter-spacing:-0.159px;white-space:pre">In Vorlage</div>
<div style="position:absolute;left:895.00px;top:448.71px;font-size:9.2px;line-height:9.2px;font-weight:400;color:#2e2e2e;letter-spacing:-0.132px;white-space:pre">umwandeln</div>
<div style="position:absolute;left:639.90px;top:517.91px;font-size:9.2px;line-height:9.2px;font-weight:400;color:#2e2e2e;letter-spacing:-0.175px;white-space:pre">Herunterladen</div>
<div style="position:absolute;left:743.60px;top:517.71px;font-size:9.2px;line-height:9.2px;font-weight:400;color:#2e2e2e;letter-spacing:-0.180px;white-space:pre">Alle</div>
<div style="position:absolute;left:733.70px;top:529.91px;font-size:9.2px;line-height:9.2px;font-weight:400;color:#2e2e2e;letter-spacing:-0.392px;white-space:pre">anzeigen</div>
</div></body></html>
